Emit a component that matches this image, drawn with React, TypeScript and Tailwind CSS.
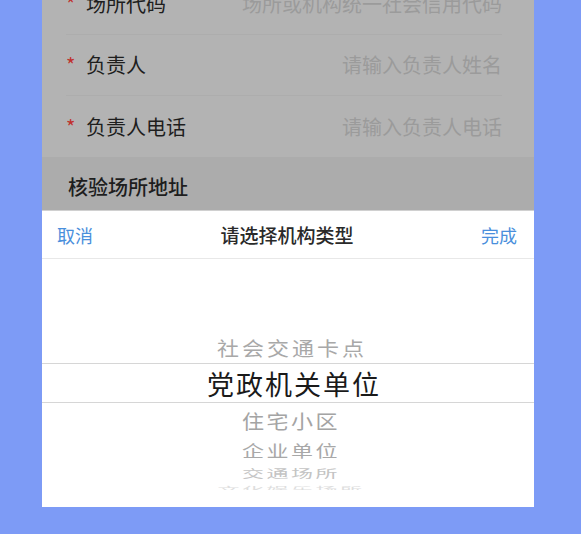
import React from 'react';

const font = { fontFamily: '"Noto Sans CJK SC", "Noto Sans", sans-serif' };

interface FieldRowProps {
  label: string;
  placeholder: string;
  first?: boolean;
  divider?: boolean;
}

const FieldRow: React.FC<FieldRowProps> = ({ label, placeholder, first, divider = true }) => (
  <div className={`flex h-[61px] items-center pl-[24px] pr-[32px] ${first ? '-mt-[26px]' : ''}`}>
    <div className={`flex h-full flex-1 items-center ${divider ? 'border-b border-[#adadad]' : ''}`}>
      <span className="w-[20px] text-[20px] leading-none text-[#c0302c]">*</span>
      <span className="text-[20px] leading-none text-[#1e1e1e]">{label}</span>
      <span className="ml-auto text-[20px] leading-none text-[#9b9b9b]">{placeholder}</span>
    </div>
  </div>
);

const App: React.FC = () => {
  return (
    <div className="h-[534px] w-[581px] overflow-hidden bg-[#7d9bf6] pl-[42px] pr-[47px]" style={font}>
      <div className="flex h-[507px] flex-col overflow-hidden">
        {/* dimmed form behind the sheet */}
        <div className="bg-[#b3b3b3]">
          <FieldRow first label="场所代码" placeholder="场所或机构统一社会信用代码" />
          <FieldRow label="负责人" placeholder="请输入负责人姓名" />
          <FieldRow label="负责人电话" placeholder="请输入负责人电话" divider={false} />
        </div>
        <div className="flex h-[53px] items-center bg-[#acacac] pl-[26px] pt-[6px]">
          <span className="text-[20px] font-medium leading-none text-[#1e1e1e]">核验场所地址</span>
        </div>

        {/* picker sheet */}
        <div className="flex flex-1 flex-col border-t border-[#d0d0d0] bg-white">
          <div className="flex h-[48px] items-center justify-between border-b border-[#e8e8e8] pl-[15px] pr-[17px]">
            <button className="text-[18px] leading-none text-[#4a8fdc]">取消</button>
            <span className="text-[19px] font-medium leading-none text-[#2a2a2a]">请选择机构类型</span>
            <button className="text-[18px] leading-none text-[#4a8fdc]">完成</button>
          </div>
          <div className="flex flex-1 flex-col items-stretch">
            <div className="h-[72px]" />
            <div className="flex h-[32px] items-center justify-center pl-[8px]">
              <span className="scale-y-[0.9] text-[22px] leading-none tracking-[3px] text-[#a8a8a8]">社会交通卡点</span>
            </div>
            <div className="flex h-[40px] items-center justify-center border-y border-[#d6d6d6] pl-[12px]">
              <span className="text-[27px] leading-none tracking-[2px] text-[#1a1a1a]">党政机关单位</span>
            </div>
            <div className="flex h-[34px] items-center justify-center pl-[6px]">
              <span className="scale-y-[0.9] text-[22px] leading-none tracking-[2.5px] text-[#a4a4a4]">住宅小区</span>
            </div>
            <div className="flex h-[26px] items-center justify-center pl-[6px]">
              <span className="scale-y-[0.72] text-[22px] leading-none tracking-[2.5px] text-[#a8a8a8]">企业单位</span>
            </div>
            <div className="flex h-[20px] items-center justify-center pl-[6px]">
              <span className="scale-y-[0.5] text-[22px] leading-none tracking-[2.5px] text-[#c4c4c4]">交通场所</span>
            </div>
            <div className="flex h-[7px] items-start justify-center overflow-hidden pl-[6px]">
              <span className="-mt-[5px] scale-y-[0.3] text-[22px] leading-none tracking-[2.5px] text-[#dedede]">文化娱乐场所</span>
            </div>
          </div>
        </div>
      </div>
    </div>
  );
};

export default App;
